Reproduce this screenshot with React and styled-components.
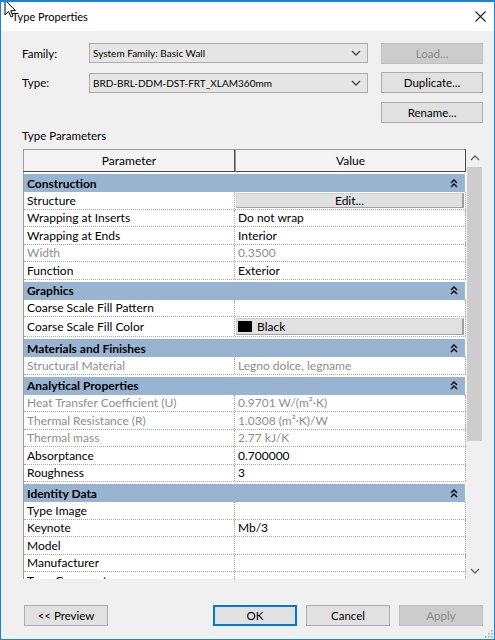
import React from 'react';
import styled, { createGlobalStyle, css } from 'styled-components';

const GlobalStyle = createGlobalStyle`
  html, body { margin:0; padding:0; background:#f0f0f0; }
  body {
    font-family: Lato, "Noto Sans", "Liberation Sans", sans-serif;
    font-size: 12px;
    color: #000;
  }
  * { box-sizing: border-box; }
`;

const sections = [
  {
    title: 'Construction',
    rows: [
      { p: 'Structure', v: 'Edit...', kind: 'button' },
      { p: 'Wrapping at Inserts', v: 'Do not wrap' },
      { p: 'Wrapping at Ends', v: 'Interior' },
      { p: 'Width', v: '0.3500', dim: true },
      { p: 'Function', v: 'Exterior' },
    ],
  },
  {
    title: 'Graphics',
    rows: [
      { p: 'Coarse Scale Fill Pattern', v: '' },
      { p: 'Coarse Scale Fill Color', v: 'Black', kind: 'color' },
    ],
  },
  {
    title: 'Materials and Finishes',
    rows: [{ p: 'Structural Material', v: 'Legno dolce, legname', dim: true }],
  },
  {
    title: 'Analytical Properties',
    rows: [
      { p: 'Heat Transfer Coefficient (U)', v: '0.9701 W/(m²·K)', dim: true },
      { p: 'Thermal Resistance (R)', v: '1.0308 (m²·K)/W', dim: true },
      { p: 'Thermal mass', v: '2.77 kJ/K', dim: true },
      { p: 'Absorptance', v: '0.700000' },
      { p: 'Roughness', v: '3' },
    ],
  },
  {
    title: 'Identity Data',
    rows: [
      { p: 'Type Image', v: '' },
      { p: 'Keynote', v: 'Mb/3' },
      { p: 'Model', v: '' },
      { p: 'Manufacturer', v: '' },
      { p: 'Type Comments', v: '' },
    ],
  },
];

const Window = styled.div`
  position: relative;
  width: 495px;
  height: 640px;
  border: 1px solid #1883d7;
  border-top-width: 2px;
  background: #f0f0f0;
  display: flex;
  flex-direction: column;
  overflow: hidden;
`;

const TitleBar = styled.div`
  height: 29px;
  flex: none;
  background: #fff;
  display: flex;
  align-items: center;
  justify-content: space-between;
  padding: 0 8px 0 11px;
  font-size: 11px;
`;

const Body = styled.div`
  flex: 1;
  display: flex;
  flex-direction: column;
  padding: 12px 11px 0 21px;
`;

const TopGrid = styled.div`
  display: grid;
  grid-template-columns: 67px 279px 1fr;
  grid-auto-rows: 20px;
  row-gap: 9.5px;
  align-items: center;
  font-size: 11.5px;
`;

const Combo = styled.div`
  height: 20px;
  border: 1px solid #acacac;
  background: #e5e5e5;
  display: flex;
  align-items: center;
  justify-content: space-between;
  padding: 0 6px 0 3px;
  font-size: 10px;
`;

const Btn = styled.button`
  height: 21px;
  width: ${p => p.$w || 'auto'};
  justify-self: end;
  border: 1px solid #adadad;
  background: #e1e1e1;
  font-family: inherit;
  font-size: 11.5px;
  color: #000;
  padding: 0;
  ${p => p.$disabled && css`
    background: #cccccc;
    border-color: #bfbfbf;
    color: #8a8a8a;
  `}
  ${p => p.$primary && css`
    border: 2px solid #0078d7;
  `}
`;

const GroupLabel = styled.div`
  margin-top: 7px;
  height: 14px;
  line-height: 14px;
  font-size: 11.5px;
`;

const GridFrame = styled.div`
  margin: 6px 0 0 1px;
  height: 430px;
  display: flex;
`;

const Table = styled.div`
  flex: 1;
  display: flex;
  flex-direction: column;
  min-width: 0;
`;

const HeaderRow = styled.div`
  display: grid;
  grid-template-columns: 212px 1fr;
  height: 23px;
  flex: none;
`;

const HeaderCell = styled.div`
  display: flex;
  align-items: center;
  justify-content: center;
  background: #f4f4f4;
  border-top: 1px solid #9a9a9a;
  border-left: 1px solid #9a9a9a;
  border-right: 1px solid #4a4a4a;
  border-bottom: 1px solid #4a4a4a;
`;

const Rows = styled.div`
  flex: 1;
  overflow: hidden;
  background: #fff;
  border-left: 1px solid #9a9a9a;
`;

const SectionRow = styled.div`
  height: 20px;
  border-top: 2px solid #fff;
  background: #99b4d1;
  font-weight: bold;
  display: flex;
  align-items: center;
  justify-content: space-between;
  padding: 0 7px 0 3px;
  margin-right: 1px;
`;

const Row = styled.div`
  display: grid;
  grid-template-columns: 211px 1fr;
  height: ${p => (p.$tall ? '20px' : '17.5px')};
  border-bottom: 1px dotted #a8a8a8;
`;

const Cell = styled.div`
  display: flex;
  align-items: center;
  padding: ${p => (p.$pad ? '1px' : '0 0 0 3px')};
  border-right: 1px dotted #a8a8a8;
  color: ${p => (p.$dim ? '#8e8e8e' : '#000')};
  white-space: nowrap;
  overflow: hidden;
`;

const CellButton = styled.div`
  flex: 1;
  height: 100%;
  display: flex;
  align-items: center;
  justify-content: ${p => (p.$left ? 'flex-start' : 'center')};
  gap: 5px;
  padding-left: ${p => (p.$left ? '1px' : '0')};
  background: #e1e1e1;
  border-top: 1px solid #d0d0d0;
  border-left: 1px solid #d0d0d0;
  border-right: 2px solid #a0a0a0;
  border-bottom: 1px solid #a0a0a0;
`;

const Swatch = styled.span`
  width: 14px;
  height: 11px;
  background: #000;
  display: inline-block;
`;

const Scrollbar = styled.div`
  width: 17px;
  flex: none;
  background: #f0f0f0;
  display: flex;
  flex-direction: column;
`;

const ArrowBox = styled.div`
  height: 17px;
  flex: none;
  display: flex;
  align-items: center;
  justify-content: center;
`;

const Thumb = styled.div`
  height: 274px;
  margin: 1px 1px 0;
  background: #cdcdcd;
  flex: none;
`;

const Spacer = styled.div`
  flex: 1;
`;

const Footer = styled.div`
  margin-top: 26px;
  display: flex;
  justify-content: space-between;
  padding-left: 2px;
`;

const BtnGroup = styled.div`
  display: flex;
  gap: 9px;
`;

const Cursor = styled.svg`
  position: absolute;
  left: 3px;
  top: -3px;
`;

const Grip = styled.svg`
  position: absolute;
  right: 1px;
  bottom: 1px;
`;

const Chevron = ({ up, color = '#444' }) => (
  <svg width="10" height="6" viewBox="0 0 10 6">
    <polyline
      points={up ? '1,5 5,1 9,5' : '1,1 5,5 9,1'}
      fill="none"
      stroke={color}
      strokeWidth="1.3"
    />
  </svg>
);

const DoubleUp = () => (
  <svg width="8" height="9" viewBox="0 0 8 9">
    <polyline points="1,4 4,1 7,4" fill="none" stroke="#000" strokeWidth="1.4" />
    <polyline points="1,8 4,5 7,8" fill="none" stroke="#000" strokeWidth="1.4" />
  </svg>
);

const renderValue = (r) => {
  if (r.kind === 'button') {
    return (
      <Cell $pad>
        <CellButton>{r.v}</CellButton>
      </Cell>
    );
  }
  if (r.kind === 'color') {
    return (
      <Cell $pad>
        <CellButton $left>
          <Swatch />
          {r.v}
        </CellButton>
      </Cell>
    );
  }
  return <Cell $dim={r.dim}>{r.v}</Cell>;
};

const App = () => {
  return (
    <Window>
      <GlobalStyle />
      <TitleBar>
        <span>Type Properties</span>
        <svg width="11" height="11" viewBox="0 0 11 11">
          <path d="M0.5 0.5 L10.5 10.5 M10.5 0.5 L0.5 10.5" stroke="#222" strokeWidth="1.1" />
        </svg>
      </TitleBar>
      <Body>
        <TopGrid>
          <span>Family:</span>
          <Combo>
            <span>System Family: Basic Wall</span>
            <Chevron />
          </Combo>
          <Btn $w="102px" $disabled>Load...</Btn>
          <span>Type:</span>
          <Combo>
            <span>BRD-BRL-DDM-DST-FRT_XLAM360mm</span>
            <Chevron />
          </Combo>
          <Btn $w="102px">Duplicate...</Btn>
          <span />
          <span />
          <Btn $w="102px">Rename...</Btn>
        </TopGrid>

        <GroupLabel>Type Parameters</GroupLabel>

        <GridFrame>
          <Table>
            <HeaderRow>
              <HeaderCell>Parameter</HeaderCell>
              <HeaderCell>Value</HeaderCell>
            </HeaderRow>
            <Rows>
              {sections.map((s) => (
                <React.Fragment key={s.title}>
                  <SectionRow>
                    <span>{s.title}</span>
                    <DoubleUp />
                  </SectionRow>
                  {s.rows.map((r) => (
                    <Row key={r.p} $tall={r.kind === 'color'}>
                      <Cell $dim={r.dim}>{r.p}</Cell>
                      {renderValue(r)}
                    </Row>
                  ))}
                </React.Fragment>
              ))}
            </Rows>
          </Table>
          <Scrollbar>
            <ArrowBox><Chevron up color="#606060" /></ArrowBox>
            <Thumb />
            <Spacer />
            <ArrowBox><Chevron color="#606060" /></ArrowBox>
          </Scrollbar>
        </GridFrame>

        <Footer>
          <Btn $w="84px">&lt;&lt; Preview</Btn>
          <BtnGroup>
            <Btn $w="84px" $primary>OK</Btn>
            <Btn $w="84px">Cancel</Btn>
            <Btn $w="84px" $disabled>Apply</Btn>
          </BtnGroup>
        </Footer>
      </Body>

      <Cursor width="14" height="20" viewBox="0 0 14 20">
        <path d="M1 1 L1 16 L4.5 12.5 L7 18 L9 17 L6.7 11.7 L11.5 11.7 Z" fill="#fff" stroke="#000" strokeWidth="1" />
      </Cursor>
      <Grip width="10" height="10" viewBox="0 0 10 10">
        {[[8, 2], [8, 5], [5, 5], [8, 8], [5, 8], [2, 8]].map(([x, y]) => (
          <rect key={x + '-' + y} x={x} y={y} width="1.5" height="1.5" fill="#a0a0a0" />
        ))}
      </Grip>
    </Window>
  );
};

export default App;
